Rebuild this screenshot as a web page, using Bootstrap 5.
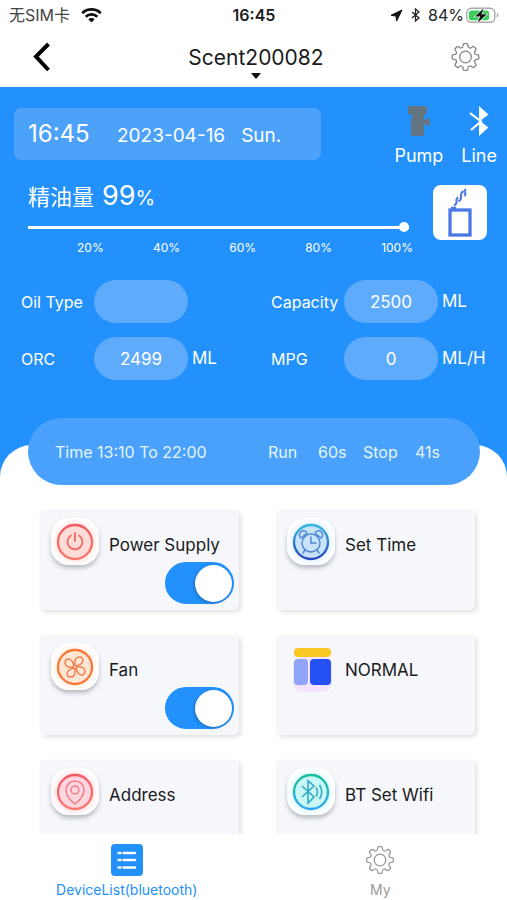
<!DOCTYPE html>
<html lang="en">
<head>
<meta charset="utf-8">
<meta name="viewport" content="width=device-width, initial-scale=1">
<title>Scent200082</title>
<link href="https://cdn.jsdelivr.net/npm/bootstrap@5.3.0/dist/css/bootstrap.min.css" rel="stylesheet">
<style>
:root { --blue: #2291fb; --pill: #4aa1fc; --field: #5eaafb; }
body { font-family: Inter, "Noto Sans CJK SC", sans-serif; color: #1b1b1d; background: #fff; }
svg { display: block; flex: none; }
.status-bar { height: 30px; font-size: 16px; line-height: 30px; padding: 0 8px 0 9px; }
.status-bar .carrier { color: #444; gap: 11px; }
.status-bar .charge { gap: 2px; }
.title-bar { height: 57px; padding: 0 27px 0 32px; }
.title-bar button, .tile button { border: 0; background: none; padding: 0; color: inherit; }
.title-bar .device-name { font-size: 21px; line-height: 26px; padding-top: 15px; }
.device-name svg { margin-top: 2px; }
.scroll-area { min-height: 0; scrollbar-width: none; background: var(--blue); color: #fff; }
.scroll-area::-webkit-scrollbar { display: none; }
.top-row { padding: 18px 10px 0 14px; }
.date-box { width: 307px; height: 52px; margin-top: 3px; padding: 0 14px; border-radius: 7px; background: #4ca2f9; font-size: 19px; }
.date-box .clock { font-size: 24px; width: 89px; }
.states { gap: 18px; }
.state { font-size: 18px; line-height: 26px; }
.level-row { padding: 14px 20px 0 28px; }
.level { width: 381px; }
.level-title { font-size: 22px; line-height: 26px; }
.level-title .amount { font-size: 27px; }
.level-title .unit { font-size: 20px; }
.oil-range { appearance: none; -webkit-appearance: none; display: block; width: 100%; height: 10px; margin: 11px 0 0; background: linear-gradient(#fff, #fff) center / 100% 3px no-repeat; }
.oil-range::-webkit-slider-thumb { -webkit-appearance: none; width: 10px; height: 10px; border-radius: 50%; background: #fff; border: 0; }
.ticks { font-size: 12px; line-height: 16px; padding: 8px 0 0 49px; margin-right: -4px; }
.diffuser { width: 54px; height: 55px; border-radius: 8px; margin-top: 2px; }
.fields { display: grid; grid-template-columns: 1fr 1fr; gap: 14px; padding: 24px 0 0 21px; font-size: 17px; }
.fields label { width: 73px; font-size: 16px; }
.fields input { width: 94px; height: 43px; border: 0; border-radius: 22px; background: var(--field); color: #fff; font-size: 17px; text-align: center; margin-right: 4px; }
.sheet { background: #fff; color: #1b1b1d; border-radius: 32px 32px 0 0; margin-top: 65px; padding: 0 27px 25px 28px; }
.schedule { position: relative; top: -27px; height: 67px; margin-bottom: -2px; padding: 0 40px 0 27px; border-radius: 34px; background: var(--pill); color: #e4f6ff; font-size: 16px; }
.schedule .span-time { width: 213px; }
.schedule .run { width: 50px; }
.schedule .run-sec { width: 45px; }
.schedule .stop { width: 52px; }
.tiles { display: grid; grid-template-columns: 1fr 1fr; gap: 25px 37px; padding: 0 5px 0 12px; }
.tile { display: grid; grid-template-columns: 48px 1fr; grid-template-rows: 44px 42px; column-gap: 10px; height: 100px; padding: 8px 5px 6px 11px; border-radius: 5px; background: #f5f7fa; box-shadow: 2px 2px 4px rgba(0, 0, 0, .13); }
.tile > svg { grid-row: 1 / 3; overflow: visible; }
.tile .caption { font-size: 17px; line-height: 34px; padding-top: 10px; text-align: left; white-space: nowrap; }
.tile .form-switch { min-height: 0; padding: 0; margin: 0; justify-self: end; }
.tile .form-check-input { display: block; float: none; margin: 0; width: 69px; height: 42px; border: 2px solid var(--blue); background: var(--blue); border-radius: 21px; position: relative; box-shadow: none; }
.tile .form-check-input::before { content: ""; position: absolute; right: 0; top: 1px; width: 37px; height: 37px; border-radius: 50%; background: #fff; box-shadow: -1px 1px 3px rgba(0, 0, 0, .25); }
.tile .form-check-input:not(:checked) { background: #ccd2da; border-color: #ccd2da; }
.tile .form-check-input:not(:checked)::before { right: auto; left: 0; }
.tab-bar { flex-shrink: 0; height: 66px; font-size: 14px; line-height: 16px; }
.tab-bar a { padding-top: 10px; color: #9a9a9a; text-decoration: none; }
.tab-bar a.current { color: var(--blue); }
.tab-bar svg { margin-bottom: 6px; }
</style>
<script src="https://cdn.jsdelivr.net/npm/bootstrap@5.3.0/dist/js/bootstrap.bundle.min.js"></script>
</head>
<body>
<svg width="0" height="0" class="position-absolute" aria-hidden="true">
  <defs>
    <path id="tooth" d="M-2.6-10.3L-2.2-12.6Q-2-13.3-1.3-13.3H1.3Q2-13.3 2.2-12.6L2.6-10.3Q4.2-8.2 5.4-9.1"/>
    <g id="quarter"><use href="#tooth"/><use href="#tooth" transform="rotate(45)"/></g>
    <g id="gear"><use href="#quarter"/><use href="#quarter" transform="rotate(90)"/><use href="#quarter" transform="rotate(180)"/><use href="#quarter" transform="rotate(270)"/><circle r="5.8"/></g>
    <linearGradient id="gRed" x2="0" y2="1"><stop stop-color="#f35b62"/><stop offset="1" stop-color="#fa7768"/></linearGradient>
    <linearGradient id="gBlue" x2="0" y2="1"><stop stop-color="#35b8df"/><stop offset="1" stop-color="#2446bd"/></linearGradient>
    <linearGradient id="gTeal" x2="0" y2="1"><stop stop-color="#18bf9c"/><stop offset="1" stop-color="#30a6f5"/></linearGradient>
    <filter id="soft" x="-30%" y="-30%" width="160%" height="170%"><feDropShadow dx="0" dy="3" stdDeviation="2" flood-color="#59606e" flood-opacity=".4"/></filter>
    <filter id="glow" x="-30%" y="-30%" width="160%" height="160%"><feGaussianBlur stdDeviation="3"/></filter>
    <rect id="plate" x="0" y="0" width="48" height="47" rx="18" fill="#fff" filter="url(#soft)"/>
  </defs>
</svg>
<div class="vh-100 d-flex flex-column">
  <header>
    <div class="status-bar d-flex align-items-center">
      <div class="carrier d-flex align-items-center col">无SIM卡
        <svg width="21" height="15" viewBox="0 0 21 15" fill="none" stroke="#111" stroke-width="2.7"><path d="M1.2 5.2a13.4 13.4 0 0 1 18.6 0M4.7 8.7a8.4 8.4 0 0 1 11.6 0"/><path d="M7.3 11.2a4.6 4.6 0 0 1 6.4 0L10.5 14.4z" fill="#111" stroke="none"/></svg>
      </div>
      <div class="fw-semibold">16:45</div>
      <div class="charge col d-flex align-items-center justify-content-end">
        <svg width="13" height="13" viewBox="0 0 13 13"><path d="M12 1L1 6.3l5 .7.6 5z" fill="#111" stroke="#111" stroke-linejoin="round"/></svg>
        <svg class="mx-1" width="13" height="14" viewBox="-2 0 13 14" fill="none" stroke="#222" stroke-width="1.3"><path d="M1 4l7 6-3.500 3V1L8 4l-7 6"/></svg>
        <span class="text-dark">84%</span>
        <svg width="33" height="17" viewBox="0 0 33 17"><rect x=".8" y="1.3" width="28" height="14" rx="4.5" fill="#fff" stroke="#aaa" stroke-width="1.4"/><rect x="3" y="3.4" width="20" height="9.8" rx="2.5" fill="#35cf5a"/><path d="M30.8 6v5q1.6-.8 1.6-2.5T30.8 6z" fill="#aaa"/><path d="M18 1L9 9.6h5.2L11.5 16l9.3-8.7h-5.4z" fill="#111" stroke="#fff" stroke-width="1.2" paint-order="stroke"/></svg>
      </div>
    </div>
    <div class="title-bar d-flex justify-content-between align-items-start">
      <div class="col pt-2">
        <button type="button" aria-label="Back" class="pt-1"><svg width="19" height="30" viewBox="0 0 19 30" fill="none" stroke="#000" stroke-width="4"><path d="M16.5 2L4 14.5 16.5 28"/></svg></button>
      </div>
      <button type="button" class="device-name d-flex flex-column align-items-center">Scent200082
        <svg width="10" height="6" viewBox="0 0 10 6"><path d="M0 0h10L6 5Q5 6 4 5z" fill="#111"/></svg>
      </button>
      <div class="col d-flex justify-content-end pt-2">
        <button type="button" aria-label="Settings" class="pt-1"><svg width="29" height="30" viewBox="-14.5 -15 29 30" fill="none" stroke="#858585" stroke-width="1.3"><use href="#gear"/></svg></button>
      </div>
    </div>
  </header>

  <main class="scroll-area flex-grow-1 overflow-auto">
    <section class="top-row d-flex justify-content-between">
      <div class="date-box d-flex align-items-center"><span class="clock">16:45</span><span class="pt-1">2023-04-16</span><span class="pt-1 ms-3">Sun.</span></div>
      <div class="states d-flex">
        <div class="state d-flex flex-column align-items-center">
          <svg width="24" height="38" viewBox="0 0 24 38" fill="#657481"><rect x="1" y="1" width="19" height="8.500" rx="1.500"/><path d="M5 9h12v6l6-2v8l-6-2v10q0 2-2 2H6q-2 0-2-2V13h1z"/></svg>Pump
        </div>
        <div class="state d-flex flex-column align-items-center">
          <svg width="20" height="38" viewBox="1 0 20 38"><path d="M11 1l9.500 8.500L12 16l8.500 6.500L11 31z" fill="#fff"/><path d="M2 8l11 8.500L3 25" fill="none" stroke="#fff" stroke-width="2.200"/></svg>Line
        </div>
      </div>
    </section>
    <section class="level-row d-flex justify-content-between align-items-start">
      <div class="level">
        <label for="oil" class="level-title d-flex align-items-baseline"><span>精油量</span><span class="amount ms-2">99</span><span class="unit">%</span></label>
        <input id="oil" class="oil-range" type="range" min="0" max="100" value="100">
        <div class="ticks d-flex justify-content-between"><span>20%</span><span>40%</span><span>60%</span><span>80%</span><span>100%</span></div>
      </div>
      <svg class="diffuser bg-white" viewBox="0 0 54 55" fill="none" stroke="#4b78e6"><rect x="17" y="25" width="20" height="25" stroke-width="3.300"/><path d="M18 23h5" stroke-width="2.400"/><path d="M21 20.500q3-1.500 2.500-4t1.500-4.500M25.500 16.500q3-2 2.500-5t2-5.500M31 11q2.500-1.500 1-3t1-4" stroke-width="2"/></svg>
    </section>
    <section class="fields">
      <div class="d-flex align-items-center"><label for="type">Oil Type</label><input id="type" type="text"></div>
      <div class="d-flex align-items-center"><label for="cap">Capacity</label><input id="cap" type="text" value="2500"><span>ML</span></div>
      <div class="d-flex align-items-center"><label for="orc">ORC</label><input id="orc" type="text" value="2499"><span>ML</span></div>
      <div class="d-flex align-items-center"><label for="mpg">MPG</label><input id="mpg" type="text" value="0"><span>ML/H</span></div>
    </section>
    <section class="sheet">
      <div class="schedule d-flex align-items-center"><span class="span-time">Time 13:10 To 22:00</span><span class="run">Run</span><span class="run-sec">60s</span><span class="stop">Stop</span><span>41s</span></div>
      <div class="tiles">
        <div class="tile">
          <svg width="48" height="48" viewBox="0 0 48 48" fill="none"><use href="#plate"/><circle cx="24" cy="24" r="19" fill="#ffd0cb" filter="url(#glow)" opacity=".8"/><circle cx="24" cy="24" r="17" fill="#ffdcd8" stroke="url(#gRed)" stroke-width="2.300"/><path d="M20 17.500a7.500 7.500 0 1 0 8 0M24 15v8" stroke="#f0726f" stroke-width="2" stroke-linecap="round"/></svg>
          <label class="caption" for="power">Power Supply</label>
          <div class="form-check form-switch"><input class="form-check-input" type="checkbox" role="switch" id="power" checked></div>
        </div>
        <div class="tile">
          <svg width="48" height="48" viewBox="0 0 48 48" fill="none"><use href="#plate"/><circle cx="24" cy="24" r="19" fill="#c9e3ff" filter="url(#glow)" opacity=".8"/><circle cx="24" cy="24" r="17" fill="#c9e2fb" stroke="url(#gBlue)" stroke-width="2.300"/><g stroke="#4b86cf" stroke-width="1.400" stroke-linecap="round"><circle cx="24" cy="25" r="9"/><path d="M24 19v6h5M18 32l-2 3M30 32l2 3M14 20a4 4 0 1 1 6-5zM34 20a4 4 0 1 0-6-5z"/></g></svg>
          <button type="button" class="caption">Set Time</button>
        </div>
        <div class="tile">
          <svg width="48" height="48" viewBox="0 0 48 48" fill="none"><use href="#plate"/><circle cx="24" cy="24" r="19" fill="#ffe1c9" filter="url(#glow)" opacity=".8"/><circle cx="24" cy="24" r="17" fill="#ffe6d3" stroke="#f5793b" stroke-width="2.300"/><g stroke="#ef8052" stroke-width="1.500"><circle cx="24" cy="24" r="1.800"/><path id="blade" d="M24 22.500C23 17 25 14 28.500 14c3.500 0 4.500 4 2 6.500-1.500 1.500-3.500 1.500-5 2.500"/><use href="#blade" transform="rotate(90 24 24)"/><use href="#blade" transform="rotate(180 24 24)"/><use href="#blade" transform="rotate(270 24 24)"/></g></svg>
          <label class="caption" for="fan">Fan</label>
          <div class="form-check form-switch"><input class="form-check-input" type="checkbox" role="switch" id="fan" checked></div>
        </div>
        <div class="tile">
          <svg width="48" height="48" viewBox="0 0 48 48"><rect x="6" y="14" width="39" height="35" rx="9" fill="#f3e3fb"/><rect x="7" y="5" width="37" height="9" rx="4" fill="#fbc926"/><rect x="7" y="16" width="14" height="26" rx="4" fill="#90a4fa"/><rect x="23" y="16" width="21" height="26" rx="4" fill="#2450f5"/></svg>
          <button type="button" class="caption">NORMAL</button>
        </div>
        <div class="tile">
          <svg width="48" height="48" viewBox="0 0 48 48" fill="none"><use href="#plate"/><circle cx="24" cy="24" r="19" fill="#ffc3d6" filter="url(#glow)" opacity=".8"/><circle cx="24" cy="24" r="17" fill="#ffd5e0" stroke="url(#gRed)" stroke-width="2.300"/><g stroke="#ee7f85" stroke-width="1.500"><path d="M24 36q-9-7-9-14a9 9 0 0 1 18 0q0 7-9 14z"/><circle cx="24" cy="22" r="4"/></g></svg>
          <button type="button" class="caption">Address</button>
        </div>
        <div class="tile">
          <svg width="48" height="48" viewBox="0 0 48 48" fill="none"><use href="#plate"/><circle cx="24" cy="24" r="19" fill="#bff6f7" filter="url(#glow)" opacity=".8"/><circle cx="24" cy="24" r="17" fill="#c8f7f6" stroke="url(#gTeal)" stroke-width="2.300"/><path d="M15 18l12 11-6 6V13l6 5-12 11M29 19.500q3 4.500 0 9M32.500 17q4.500 7 0 14" stroke="#35a9c9" stroke-width="1.600"/></svg>
          <button type="button" class="caption">BT Set Wifi</button>
        </div>
      </div>
    </section>
  </main>

  <nav class="tab-bar d-flex bg-white">
    <a href="#devices" class="current col d-flex flex-column align-items-center"><svg width="32" height="32" viewBox="0 0 32 32"><rect width="32" height="32" rx="4" fill="#2291fb"/><path d="M12.500 9H24M12.500 16H24M12.500 23.500H24M7.500 9H9.500M7.500 16H9.500M7.500 23.500H9.500" stroke="#fff" stroke-width="2.400" stroke-linecap="round"/></svg>DeviceList(bluetooth)</a>
    <a href="#my" class="col d-flex flex-column align-items-center"><svg width="32" height="32" viewBox="-16 -16 32 32" fill="none" stroke="#9a9a9a" stroke-width="1.300"><use href="#gear"/></svg>My</a>
  </nav>
</div>
</body>
</html>
